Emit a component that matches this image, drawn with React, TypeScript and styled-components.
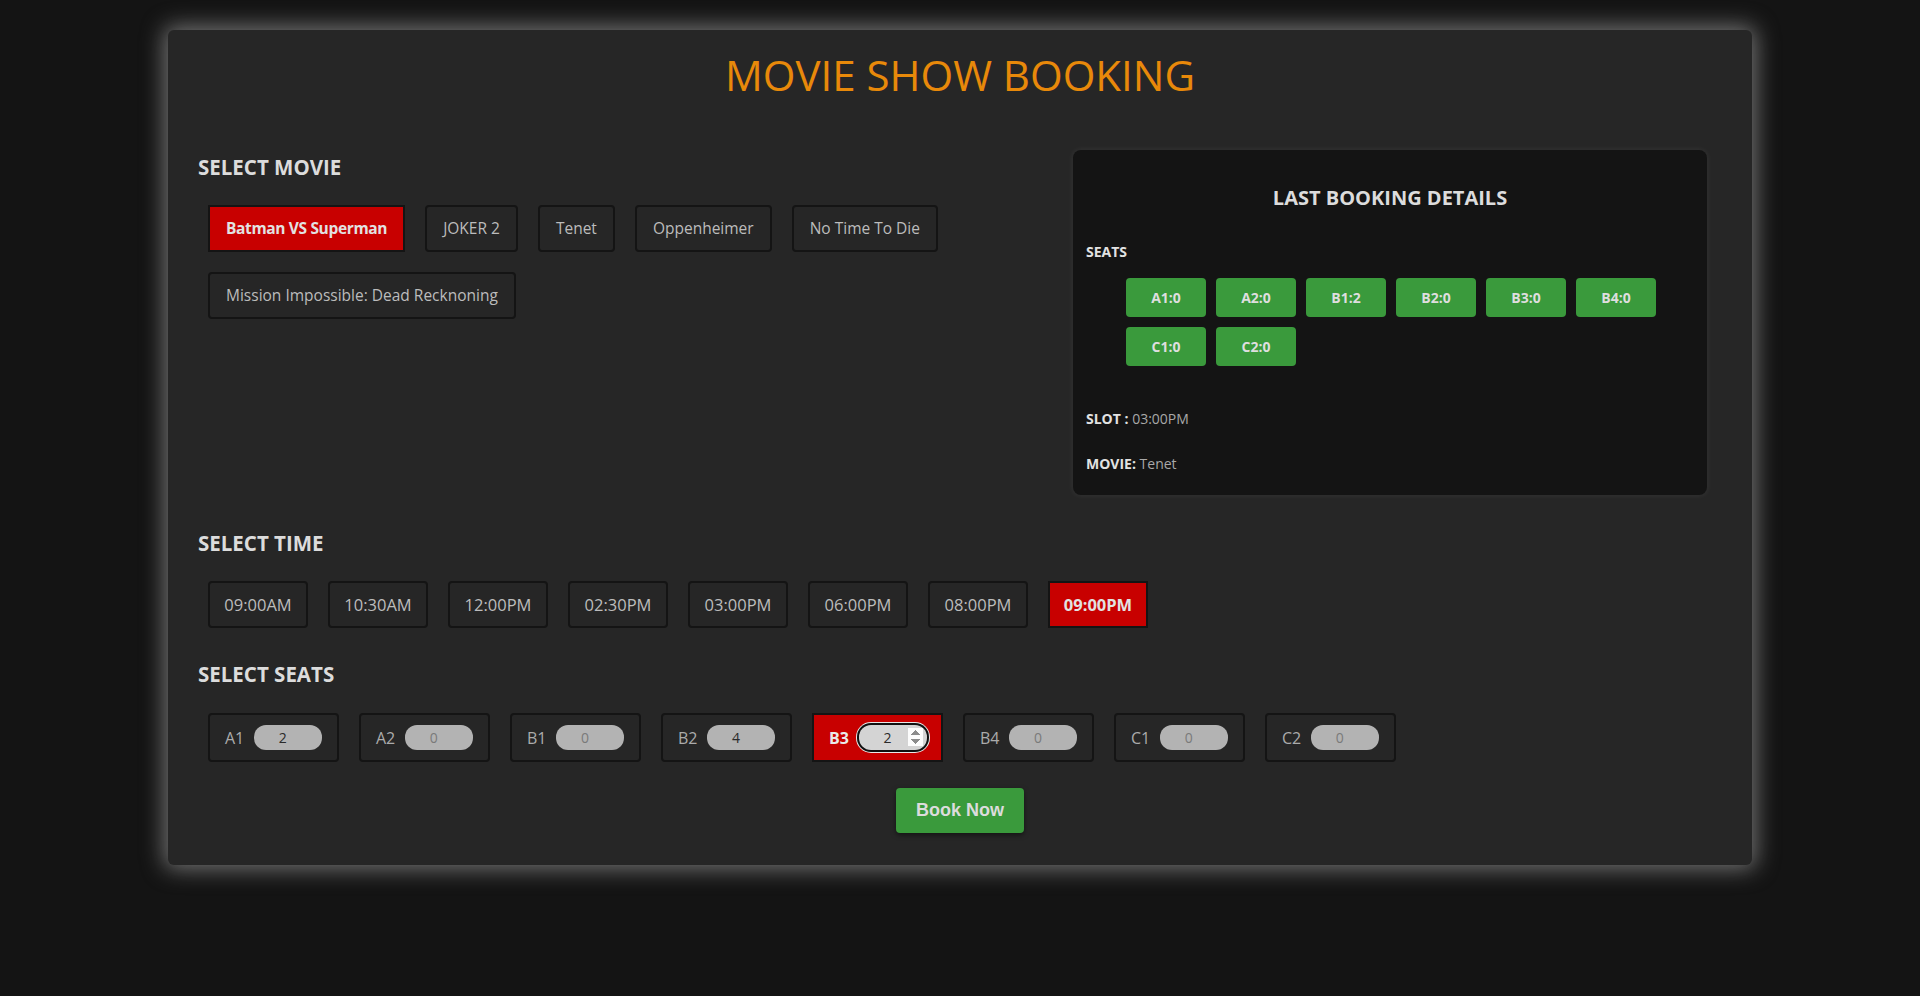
import React, { useState } from "react";
import styled, { createGlobalStyle } from "styled-components";

const GlobalStyle = createGlobalStyle`
  html, body {
    margin: 0;
    padding: 0;
    background: #141414;
    font-family: "Open Sans", "Noto Sans", sans-serif;
  }
  #root {
    min-height: 996px;
    padding-top: 30px;
    box-sizing: border-box;
  }
  * { box-sizing: border-box; }
`;

const Card = styled.div`
  width: 1584px;
  margin: 0 auto;
  background: #262626;
  border-radius: 6px;
  padding: 20px 30px 32px;
  box-shadow: 0 0 22px 4px rgba(190, 190, 190, 0.55);
`;

const Title = styled.h1`
  margin: 0;
  text-align: center;
  font-size: 42px;
  line-height: 50px;
  font-weight: 400;
  color: #e8890a;
`;

const TopRow = styled.div`
  display: flex;
  align-items: flex-start;
  margin-top: 50px;
`;

const LeftCol = styled.div`
  flex: 1;
`;

const Heading = styled.h2<{ $top: number }>`
  margin: ${(p) => p.$top}px 0 0;
  font-size: 20.5px;
  line-height: 24px;
  font-weight: 700;
  color: #dcdcdc;
`;

const ButtonGroup = styled.div`
  display: flex;
  flex-wrap: wrap;
  gap: 20px;
  margin-top: 26px;
  padding-left: 10px;
`;

const ChoiceButton = styled.button<{ $active: boolean; $fixed?: number }>`
  font-family: "Open Sans", "Noto Sans", sans-serif;
  font-size: ${(p) => (p.$fixed ? 16.5 : 15.5)}px;
  line-height: 23px;
  padding: 10px 16px;
  ${(p) => (p.$fixed ? `width: ${p.$fixed}px; padding: 10px 0;` : "")}
  ${(p) => (p.$active && !p.$fixed ? "letter-spacing: -0.35px;" : "")}
  border: 2px solid #141414;
  border-radius: ${(p) => (p.$active ? 0 : 4)}px;
  background: ${(p) => (p.$active ? "#c80000" : "#262626")};
  color: ${(p) => (p.$active ? "#e2e2e2" : "#bcbcbc")};
  font-weight: ${(p) => (p.$active ? 700 : 400)};
  cursor: pointer;
`;

const BookingBox = styled.div`
  width: 634px;
  margin-right: 15px;
  background: #141414;
  border-radius: 8px;
  padding: 0 13px 21px;
  box-shadow: 0 0 6px rgba(255, 255, 255, 0.08);
`;

const BoxTitle = styled.h3`
  margin: 34px 0 0;
  text-align: center;
  font-size: 20px;
  line-height: 28px;
  font-weight: 700;
  color: #dcdcdc;
`;

const BoxLabel = styled.div<{ $top: number }>`
  margin-top: ${(p) => p.$top}px;
  font-size: 14px;
  line-height: 20px;
  color: #a8a8a8;
  b {
    color: #e2e2e2;
    font-weight: 700;
  }
`;

const ChipList = styled.div`
  display: flex;
  flex-wrap: wrap;
  gap: 10px;
  margin-top: 16px;
  padding-left: 40px;
`;

const Chip = styled.div`
  width: 80px;
  height: 39px;
  border-radius: 4px;
  background: #3a9a3c;
  color: #dedede;
  font-size: 14px;
  font-weight: 700;
  display: flex;
  align-items: center;
  justify-content: center;
`;

const SeatRow = styled.div`
  display: flex;
  gap: 20px;
  margin-top: 27px;
  padding-left: 10px;
`;

const SeatBox = styled.label<{ $active: boolean }>`
  width: 131px;
  height: 49px;
  display: flex;
  align-items: center;
  gap: 10px;
  padding: 0 15px;
  border: 2px solid #141414;
  border-radius: ${(p) => (p.$active ? 0 : 4)}px;
  background: ${(p) => (p.$active ? "#c80000" : "#262626")};
`;

const SeatName = styled.span<{ $active: boolean }>`
  width: 20px;
  font-size: 16px;
  line-height: 20px;
  color: ${(p) => (p.$active ? "#eaeaea" : "#ababab")};
  font-weight: ${(p) => (p.$active ? 700 : 400)};
`;

const SeatInput = styled.input<{ $active: boolean; $zero: boolean }>`
  width: 68px;
  height: 25px;
  border: none;
  border-radius: 12px;
  padding: 0 4px 0 8px;
  text-align: center;
  font-family: "Open Sans", "Noto Sans", sans-serif;
  font-size: 14px;
  color: ${(p) => (p.$zero ? "#7a7a7a" : "#2a2a2a")};
  background: ${(p) => (p.$active ? "#d4d4d4" : "#b3b3b3")};
  outline: none;
  box-shadow: ${(p) =>
    p.$active ? "0 0 0 2px #101010, 0 0 0 3px #e8e8e8" : "none"};
`;

const BookButton = styled.button`
  display: block;
  margin: 26px auto 0;
  width: 128px;
  height: 45px;
  border: none;
  border-radius: 4px;
  background: #3a9a3c;
  color: #dcdcdc;
  font-family: "Liberation Sans", Arial, sans-serif;
  font-size: 18px;
  font-weight: 700;
  box-shadow: 0 2px 5px rgba(0, 0, 0, 0.5);
  cursor: pointer;
`;

const movies = [
  "Batman VS Superman",
  "JOKER 2",
  "Tenet",
  "Oppenheimer",
  "No Time To Die",
  "Mission Impossible: Dead Recknoning",
];

const times = [
  "09:00AM",
  "10:30AM",
  "12:00PM",
  "02:30PM",
  "03:00PM",
  "06:00PM",
  "08:00PM",
  "09:00PM",
];

const seatNames = ["A1", "A2", "B1", "B2", "B3", "B4", "C1", "C2"];

const lastSeats = [
  ["A1", 0],
  ["A2", 0],
  ["B1", 2],
  ["B2", 0],
  ["B3", 0],
  ["B4", 0],
  ["C1", 0],
  ["C2", 0],
];

export default function App() {
  const [movie, setMovie] = useState("Batman VS Superman");
  const [time, setTime] = useState("09:00PM");
  const [activeSeat, setActiveSeat] = useState("B3");
  const [seats, setSeats] = useState<Record<string, number>>({
    A1: 2,
    A2: 0,
    B1: 0,
    B2: 4,
    B3: 2,
    B4: 0,
    C1: 0,
    C2: 0,
  });

  return (
    <>
      <GlobalStyle />
      <Card>
        <Title>MOVIE SHOW BOOKING</Title>
        <TopRow>
          <LeftCol>
            <Heading $top={5}>SELECT MOVIE</Heading>
            <ButtonGroup>
              {movies.map((m) => (
                <ChoiceButton
                  key={m}
                  $active={m === movie}
                  onClick={() => setMovie(m)}
                >
                  {m}
                </ChoiceButton>
              ))}
            </ButtonGroup>
          </LeftCol>
          <BookingBox>
            <BoxTitle>LAST BOOKING DETAILS</BoxTitle>
            <BoxLabel $top={30}>
              <b>SEATS</b>
            </BoxLabel>
            <ChipList>
              {lastSeats.map(([n, c]) => (
                <Chip key={n as string}>
                  {n}:{c}
                </Chip>
              ))}
            </ChipList>
            <BoxLabel $top={43}>
              <b>SLOT :</b> 03:00PM
            </BoxLabel>
            <BoxLabel $top={25}>
              <b>MOVIE:</b> Tenet
            </BoxLabel>
          </BookingBox>
        </TopRow>

        <Heading $top={36}>SELECT TIME</Heading>
        <ButtonGroup>
          {times.map((t) => (
            <ChoiceButton
              key={t}
              $fixed={100}
              $active={t === time}
              onClick={() => setTime(t)}
            >
              {t}
            </ChoiceButton>
          ))}
        </ButtonGroup>

        <Heading $top={34}>SELECT SEATS</Heading>
        <SeatRow>
          {seatNames.map((s) => (
            <SeatBox
              key={s}
              $active={s === activeSeat}
              onClick={() => setActiveSeat(s)}
            >
              <SeatName $active={s === activeSeat}>{s}</SeatName>
              <SeatInput
                type="number"
                min={0}
                autoFocus={s === "B3"}
                $active={s === activeSeat}
                $zero={seats[s] === 0}
                value={seats[s]}
                onChange={(e) =>
                  setSeats({ ...seats, [s]: Number(e.target.value) })
                }
              />
            </SeatBox>
          ))}
        </SeatRow>

        <BookButton>Book Now</BookButton>
      </Card>
    </>
  );
}
